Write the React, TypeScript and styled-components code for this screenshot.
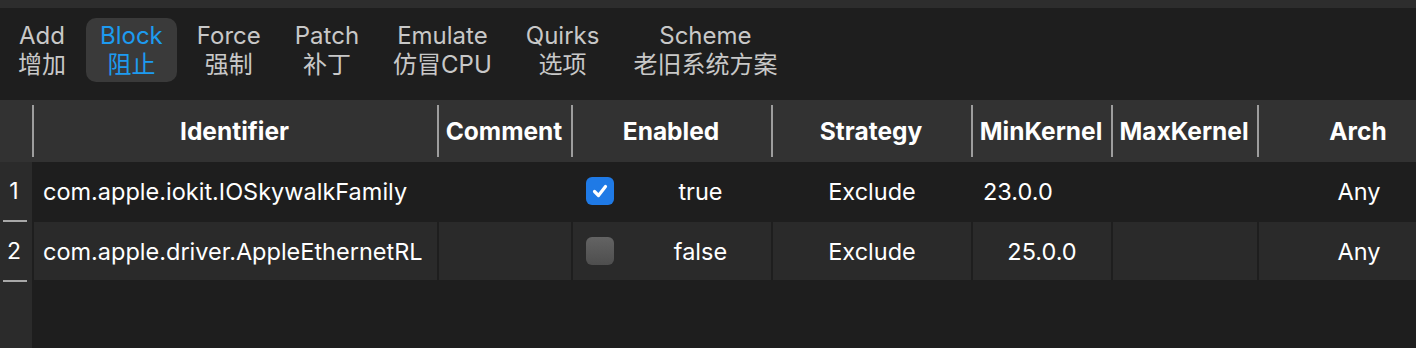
import styled, { createGlobalStyle } from 'styled-components'

const GlobalStyle = createGlobalStyle`
  html, body {
    margin: 0;
    padding: 0;
    background: #1e1e1e;
  }
  body {
    font-family: Inter, "Noto Sans CJK SC", sans-serif;
    color: #ffffff;
  }
`

type Tab = {
  en: string
  zh: string
}

type Entry = {
  identifier: string
  comment: string
  enabled: boolean
  strategy: string
  minKernel: string
  maxKernel: string
  arch: string
  editing?: boolean
}

const tabs: Tab[] = [
  { en: 'Add', zh: '增加' },
  { en: 'Block', zh: '阻止' },
  { en: 'Force', zh: '强制' },
  { en: 'Patch', zh: '补丁' },
  { en: 'Emulate', zh: '仿冒CPU' },
  { en: 'Quirks', zh: '选项' },
  { en: 'Scheme', zh: '老旧系统方案' },
]

const columns = [
  'Identifier',
  'Comment',
  'Enabled',
  'Strategy',
  'MinKernel',
  'MaxKernel',
  'Arch',
]

const entries: Entry[] = [
  {
    identifier: 'com.apple.iokit.IOSkywalkFamily',
    comment: '',
    enabled: true,
    strategy: 'Exclude',
    minKernel: '23.0.0',
    maxKernel: '',
    arch: 'Any',
    editing: true,
  },
  {
    identifier: 'com.apple.driver.AppleEthernetRL',
    comment: '',
    enabled: false,
    strategy: 'Exclude',
    minKernel: '25.0.0',
    maxKernel: '',
    arch: 'Any',
  },
]

const Page = styled.div`
  height: 100vh;
  display: flex;
  flex-direction: column;
  overflow: hidden;
`

const TopStrip = styled.div`
  height: 8px;
  flex: none;
  background: #2d2d2d;
`

const Toolbar = styled.div`
  height: 92px;
  flex: none;
  display: flex;
  align-items: flex-start;
  gap: 6px;
  padding: 10px 0 0 4px;
  box-sizing: border-box;
`

const TabButton = styled.div<{ $active?: boolean }>`
  height: 64px;
  padding: 0 14px;
  display: flex;
  flex-direction: column;
  align-items: center;
  justify-content: center;
  border-radius: 10px;
  background: ${({ $active }) => ($active ? '#3a3a3a' : 'transparent')};
  color: ${({ $active }) => ($active ? '#1d9bf0' : '#c8c8c8')};
  font-size: 24px;
  line-height: 29px;
  white-space: nowrap;
`

const Table = styled.div`
  flex: 1;
  display: grid;
  grid-template-columns: 32px 405px 134px 200px 200px 140px 146px 202px;
  grid-template-rows: 62px 60px 60px 1fr;
  overflow: hidden;
`

const HeaderCorner = styled.div`
  background: #323232;
`

const HeaderCell = styled.div`
  position: relative;
  background: #323232;
  display: flex;
  align-items: center;
  justify-content: center;
  font-weight: 700;
  font-size: 24.5px;
  white-space: nowrap;
  overflow: hidden;

  &::before {
    content: '';
    position: absolute;
    left: 0;
    top: 5px;
    bottom: 5px;
    width: 2px;
    background: #9d9d9d;
  }
`

const RowNumber = styled.div`
  position: relative;
  background: #2b2b2b;
  display: flex;
  align-items: center;
  justify-content: center;
  font-size: 23px;
  padding: 0 4px 2px 0;
  box-sizing: border-box;

  &::after {
    content: '';
    position: absolute;
    left: 3px;
    right: 5px;
    bottom: 0;
    height: 2px;
    background: #a8a8a8;
  }
`

const Cell = styled.div<{ $striped?: boolean; $align?: 'left' | 'center' }>`
  background: ${({ $striped }) => ($striped ? '#2a2a2a' : '#1e1e1e')};
  border-left: 2px solid #1e1e1e;
  border-bottom: 2px solid #1e1e1e;
  display: flex;
  align-items: center;
  justify-content: ${({ $align }) => ($align === 'left' ? 'flex-start' : 'center')};
  padding: 0 9px;
  box-sizing: border-box;
  font-size: 23.5px;
  white-space: nowrap;
  overflow: hidden;
`

const EnabledCell = styled(Cell)`
  justify-content: flex-start;
  padding: 0 0 0 13px;
`

const Checkbox = styled.span<{ $checked?: boolean }>`
  width: 28px;
  height: 28px;
  flex: none;
  border-radius: 6px;
  display: flex;
  align-items: center;
  justify-content: center;
  background: ${({ $checked }) =>
    $checked ? '#1f7ae6' : 'linear-gradient(#636363, #4e4e4e)'};
`

const BoolText = styled.span`
  flex: 1;
  text-align: center;
  padding-left: 16px;
`

const KernelText = styled.span<{ $editing?: boolean }>`
  padding-left: ${({ $editing }) => ($editing ? '1px' : '0')};
`

const RowFill = styled.div`
  background: #2b2b2b;
`

const CheckMark = () => (
  <svg width="18" height="18" viewBox="0 0 18 18">
    <path
      d="M3.5 9.5 L7.5 13.5 L14.5 4.5"
      fill="none"
      stroke="#ffffff"
      strokeWidth="3.2"
      strokeLinecap="round"
      strokeLinejoin="round"
    />
  </svg>
)

const App = () => {
  return (
    <Page>
      <GlobalStyle />
      <TopStrip />
      <Toolbar>
        {tabs.map((tab) => (
          <TabButton key={tab.en} $active={tab.en === 'Block'}>
            <span>{tab.en}</span>
            <span>{tab.zh}</span>
          </TabButton>
        ))}
      </Toolbar>

      <Table>
        <HeaderCorner />
        {columns.map((col) => (
          <HeaderCell key={col}>{col}</HeaderCell>
        ))}

        {entries.map((entry, index) => {
          const striped = index % 2 === 1
          return [
            <RowNumber key={`n-${index}`}>{index + 1}</RowNumber>,
            <Cell key={`id-${index}`} $striped={striped} $align="left">
              {entry.identifier}
            </Cell>,
            <Cell key={`c-${index}`} $striped={striped}>
              {entry.comment}
            </Cell>,
            <EnabledCell key={`e-${index}`} $striped={striped}>
              <Checkbox $checked={entry.enabled}>
                {entry.enabled && <CheckMark />}
              </Checkbox>
              <BoolText>{entry.enabled ? 'true' : 'false'}</BoolText>
            </EnabledCell>,
            <Cell key={`s-${index}`} $striped={striped}>
              {entry.strategy}
            </Cell>,
            <Cell
              key={`min-${index}`}
              $striped={striped}
              $align={entry.editing ? 'left' : 'center'}
            >
              <KernelText $editing={entry.editing}>{entry.minKernel}</KernelText>
            </Cell>,
            <Cell key={`max-${index}`} $striped={striped}>
              {entry.maxKernel}
            </Cell>,
            <Cell key={`a-${index}`} $striped={striped}>
              {entry.arch}
            </Cell>,
          ]
        })}

        <RowFill />
      </Table>
    </Page>
  )
}

export default App
